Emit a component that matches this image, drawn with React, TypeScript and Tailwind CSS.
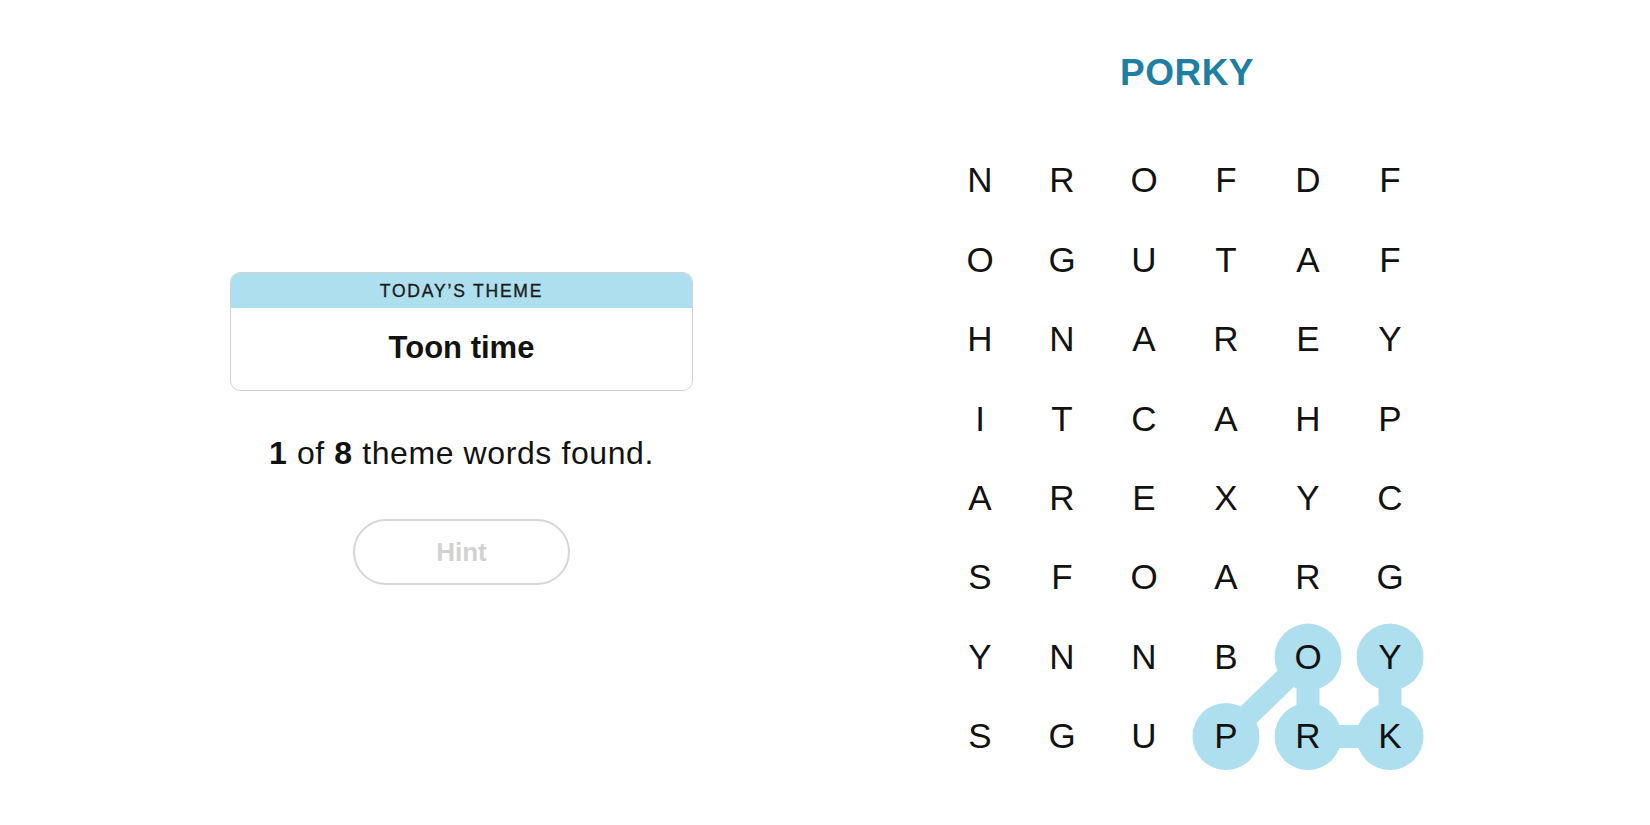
import React from "react";

const GRID = [
  "NROFDF",
  "OGUTAF",
  "HNAREY",
  "ITCAHP",
  "AREXYC",
  "SFOARG",
  "YNNBOY",
  "SGUPRK",
];

const CW = 82;
const RH = 79.4;
const cx = (c: number) => CW / 2 + CW * c;
const cy = (r: number) => RH / 2 + RH * r;

const PATH: [number, number][] = [
  [7, 3],
  [6, 4],
  [7, 4],
  [7, 5],
  [6, 5],
];

export default function App() {
  return (
    <div
      className="w-[1650px] h-[825px] bg-white flex overflow-hidden text-[#121212]"
      style={{ fontFamily: '"Liberation Sans", Arial, sans-serif' }}
    >
      <div className="w-[923px] flex flex-col items-center pt-[272px]">
        <div className="w-[463px] h-[119px] rounded-[10px] border border-[#d2d2d2] overflow-hidden flex flex-col">
          <div className="h-[35px] bg-[#aedfee] flex items-center justify-center text-[17.5px] tracking-[1.8px] text-[#1b1b1b] pt-[2px] [-webkit-text-stroke:0.35px_#1b1b1b]">
            TODAY’S THEME
          </div>
          <div className="flex-1 flex items-center justify-center text-[31px] font-bold pb-[2px]">
            Toon time
          </div>
        </div>
        <div className="mt-[42px] h-[40px] leading-[40px] text-[32px] tracking-[0.6px]">
          <span className="font-bold">1</span> of <span className="font-bold">8</span> theme words found.
        </div>
        <div className="mt-[46px] w-[217px] h-[66px] rounded-full border-2 border-[#d6d6d6] flex items-center justify-center text-[26px] font-bold text-[#d2d2d2]">
          Hint
        </div>
      </div>
      <div className="w-[524px] flex flex-col items-center pt-[49px]">
        <div className="h-[48px] leading-[48px] text-[37px] font-bold tracking-[0.5px] text-[#1f7fa3] pl-[4px]">
          PORKY
        </div>
        <div className="relative mt-[44px] w-[492px]">
          <svg
            className="absolute left-0 top-0"
            width={492}
            height={635}
            viewBox="0 0 492 635"
          >
            {PATH.slice(1).map(([r, c], i) => {
              const [pr, pc] = PATH[i];
              return (
                <line
                  key={i}
                  x1={cx(pc)}
                  y1={cy(pr)}
                  x2={cx(c)}
                  y2={cy(r)}
                  stroke="#aedfee"
                  strokeWidth={23}
                />
              );
            })}
            {PATH.map(([r, c], i) => (
              <circle key={i} cx={cx(c)} cy={cy(r)} r={33.5} fill="#aedfee" />
            ))}
          </svg>
          <div className="relative grid grid-cols-[repeat(6,82px)]">
            {GRID.map((row, r) =>
              row.split("").map((ch, c) => (
                <div
                  key={`${r}-${c}`}
                  className="h-[79.4px] flex items-center justify-center text-[35px] text-[#121212]"
                >
                  {ch}
                </div>
              ))
            )}
          </div>
        </div>
      </div>
    </div>
  );
}
